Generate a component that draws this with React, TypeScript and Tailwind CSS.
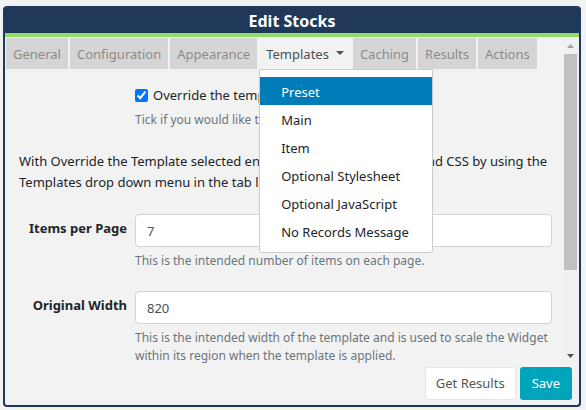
import { useState } from "react";
import type { ReactNode } from "react";

const menuItems = [
  "Preset",
  "Main",
  "Item",
  "Optional Stylesheet",
  "Optional JavaScript",
  "No Records Message",
];

function Tab({ label }: { label: string }) {
  return (
    <button type="button" className="mx-px bg-[#d5d5d5] px-[7px] pt-[6px] pb-1 text-[#8c8c8c]">
      {label}
    </button>
  );
}

function TemplatesTab() {
  const [selected, setSelected] = useState("Preset");
  return (
    <div className="relative mx-px">
      <button
        type="button"
        aria-haspopup="menu"
        aria-expanded="true"
        className="flex items-center gap-[7px] px-[7px] pt-[6px] pb-1 text-[#495057]"
      >
        Templates
        <svg width="8" height="4" viewBox="0 0 8 4" className="mb-1" aria-hidden="true">
          <path d="M0 0h8L4 4z" fill="currentColor" />
        </svg>
      </button>
      <div
        role="menu"
        className="absolute top-full left-0 z-10 min-w-[174px] rounded-b-[3px] border border-[#cccccc] bg-white py-[7px]"
      >
        {menuItems.map((item) => (
          <button
            key={item}
            type="button"
            role="menuitem"
            onClick={() => setSelected(item)}
            className={
              item === selected
                ? "block w-full bg-[#007cb8] px-[21px] pt-[5px] pb-[3px] text-left leading-5 whitespace-nowrap text-white"
                : "block w-full px-[21px] pt-[5px] pb-[3px] text-left leading-5 whitespace-nowrap text-[#212529]"
            }
          >
            {item}
          </button>
        ))}
      </div>
    </div>
  );
}

function Field({ id, label, value, children }: { id: string; label: string; value: string; children: ReactNode }) {
  return (
    <div className="flex">
      <label htmlFor={id} className="w-[116px] shrink-0 pt-1 pr-2 text-right font-bold text-[#212529]">
        {label}
      </label>
      <div className="min-w-0 flex-1">
        <input
          id={id}
          type="text"
          defaultValue={value}
          aria-describedby={`${id}-help`}
          className="block h-[33px] w-full rounded-[4px] border border-[#ced4da] bg-white px-[11px] text-[#495057]"
        />
        <p id={`${id}-help`} className="mt-[5px] text-[12px] leading-[18px] text-[#6c757d]">
          {children}
        </p>
      </div>
    </div>
  );
}

function Scrollbar() {
  return (
    <div className="flex w-[17px] shrink-0 flex-col items-center bg-[#f1f1f1]" aria-hidden="true">
      <svg width="17" height="17" viewBox="0 0 17 17" className="shrink-0">
        <path d="M5 11h7L8.500 7z" fill="#a3a3a3" />
      </svg>
      <div className="flex w-[13px] flex-1 flex-col">
        <div className="grow-[215] bg-[#c1c1c1]" />
        <div className="grow-[77]" />
      </div>
      <svg width="17" height="17" viewBox="0 0 17 17" className="shrink-0">
        <path d="M5 6h7l-3.500 4z" fill="#505050" />
      </svg>
    </div>
  );
}

export default function App() {
  return (
    <div className="bg-[#f2f2f2] pt-[6px] pr-[5px] pb-[3px] pl-[3px] font-['Noto_Sans',sans-serif] text-[13px] leading-[21px] text-[#212529]">
      <section className="rounded-[4px] border-2 border-t-0 border-[#20395a]" aria-labelledby="dialog-title">
        <header className="rounded-t-[2px] border-b-4 border-[#90de67] bg-[#20395a] pt-1 text-center">
          <h1 id="dialog-title" className="text-[16px] leading-[23px] font-bold text-white">
            Edit Stocks
          </h1>
        </header>
        <div className="flex">
          <div className="min-w-0 flex-1">
            <nav className="flex pt-px" aria-label="Widget options">
              <Tab label="General" />
              <Tab label="Configuration" />
              <Tab label="Appearance" />
              <TemplatesTab />
              <Tab label="Caching" />
              <Tab label="Results" />
              <Tab label="Actions" />
            </nav>
            <form className="pt-4 pr-[10px] pl-[14px]">
              <div className="ml-[116px]">
                <label htmlFor="override" className="flex items-center gap-[5px]">
                  <input id="override" type="checkbox" defaultChecked className="size-[13px] accent-[#0075ff]" />
                  Override the template?
                </label>
                <p className="mt-[5px] text-[12px] leading-[18px] text-[#6c757d]">
                  Tick if you would like to override the template.
                </p>
              </div>
              <p className="mt-[22px] mb-[21px]">
                With Override the Template selected enter your alternative HTML and CSS by using the Templates drop down
                menu in the tab list.
              </p>
              <div className="flex flex-col gap-[21px]">
                <Field id="items" label="Items per Page" value="7">
                  This is the intended number of items on each page.
                </Field>
                <Field id="width" label="Original Width" value="820">
                  This is the intended width of the template and is used to scale the Widget within its region when the
                  template is applied.
                </Field>
              </div>
            </form>
          </div>
          <Scrollbar />
        </div>
        <footer className="flex justify-end gap-1 px-[7px] pt-[2px] pb-[5px]">
          <button type="button" className="h-[33px] rounded-[3px] border border-[#e6e6e6] bg-white px-[10px] text-[#555555]">
            Get Results
          </button>
          <button type="button" className="h-[33px] rounded-[3px] bg-[#00a5bb] px-3 text-white">
            Save
          </button>
        </footer>
      </section>
    </div>
  );
}
